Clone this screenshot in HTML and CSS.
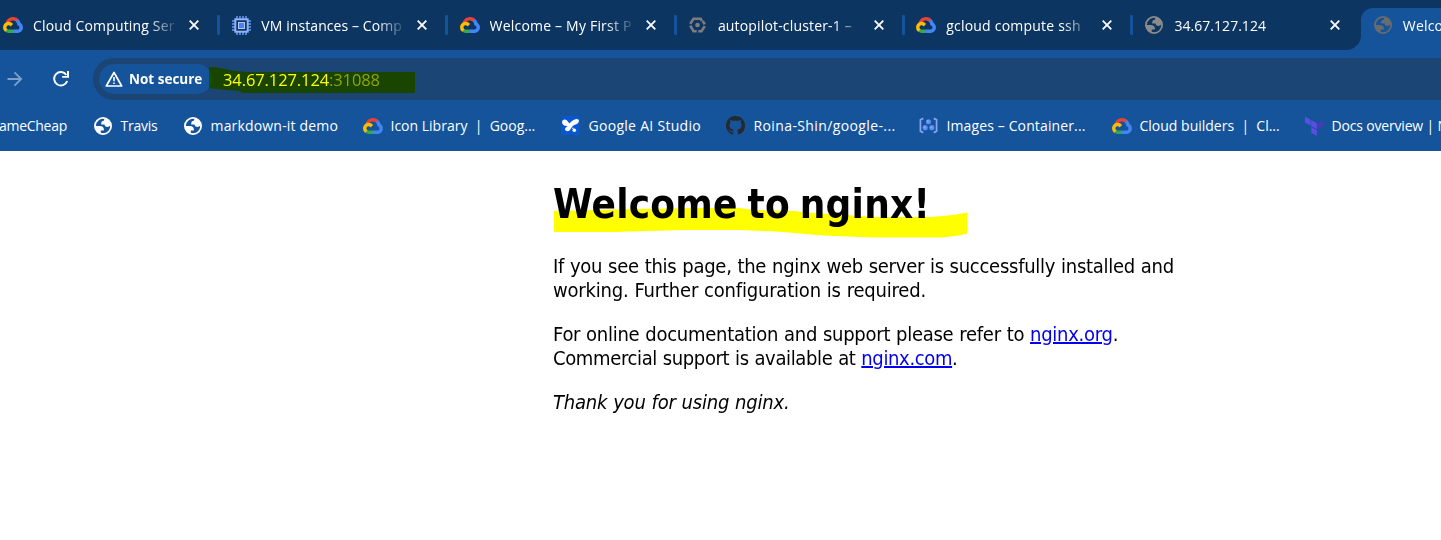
FILE: index.html
```html
<!DOCTYPE html>
<html lang="en">
<head>
<meta charset="utf-8">
<title>Welcome to nginx!</title>
<link rel="stylesheet" href="styles.css">
</head>
<body>
<svg class="sprite" aria-hidden="true">
  <symbol id="gcp" viewBox="0 0 256 206">
    <path fill="#ea4335" d="M170.25 56.82l22.25-22.25 1.49-9.37C153.44-11.68 88.98-7.5 52.42 33.92 42.27 45.42 34.73 59.76 30.72 74.57l7.97-1.12 44.5-7.34 3.44-3.51c19.8-21.74 53.27-24.67 76.13-6.17z"/>
    <path fill="#4285f4" d="M224.2 73.92A100.2 100.2 0 0 0 194 25.2l-31.23 31.23a55.5 55.5 0 0 1 20.37 44.04v5.54c15.35 0 27.8 12.45 27.8 27.8s-12.45 27.48-27.8 27.48h-55.67l-5.47 5.93v33.34l5.47 5.24h55.67c39.93.31 72.55-31.49 72.86-71.42.19-24.2-11.74-46.9-31.8-60.46"/>
    <path fill="#34a853" d="M71.87 205.8h55.6v-44.51h-55.6a27.3 27.3 0 0 1-11.48-2.5l-7.8 2.42-22.41 22.25-1.95 7.58a72.3 72.3 0 0 0 43.64 14.76"/>
    <path fill="#fbbc05" d="M71.87 61.43C31.94 61.66-.24 94.22 0 134.15c.13 22.25 10.6 43.25 28.22 56.89l32.25-32.24a27.8 27.8 0 1 1 36.8-36.75l32.24-32.25a72.5 72.5 0 0 0-57.64-28.37"/>
  </symbol>
  <symbol id="globe" viewBox="2 2 20 20">
    <path fill="currentColor" fill-rule="evenodd" d="M12 2a10 10 0 1 0 0 20 10 10 0 0 0 0-20zM4 12h4.4c3.407.022 4.922 1.73 4.543 5.127H9.488v2.47a8.004 8.004 0 0 0 10.498-8.08C19.327 12.5 18.332 13 17 13c-2.137 0-3.206-.917-3.206-2.75h-3.748c-.274-2.728.683-4.092 2.87-4.092 0-.975.327-1.597.811-1.97A8.004 8.004 0 0 0 4 12z"/>
  </symbol>
  <symbol id="chip" viewBox="0 0 19 19">
    <path stroke="#669df6" stroke-width="1.5" d="M5 0v19M8 0v19M11 0v19M14 0v19M0 5h19M0 8h19M0 11h19M0 14h19"/>
    <rect x="3.3" y="3.3" width="12.4" height="12.4" fill="#0c3561" stroke="#8fb0fa" stroke-width="2"/>
    <rect x="6.5" y="6.5" width="6" height="6" fill="#4a80f0" stroke="#aecbfa" stroke-width="1"/>
  </symbol>
  <symbol id="cluster" viewBox="0 0 18 16">
    <path fill="none" stroke="#7c7c80" stroke-width="2.8" d="M1.300 6.800L4.800 1.400h7.600l1.200 2.200M16.700 9.200l-3.500 5.400H9.800M8.200 14.600H4.800L1.300 8.600M16.700 7.400l-2.200-3.600"/>
    <circle cx="9" cy="8" r="2.500" fill="#7c7c80"/>
  </symbol>
  <symbol id="close" viewBox="0 0 10 10"><path fill="none" stroke="#fff" stroke-width="1.8" d="M.7.7l8.6 8.6M9.3.7L.7 9.3"/></symbol>
</svg>

<header>
  <nav class="tabs">
    <div class="tab"><span class="ico"><svg class="gcp"><use href="#gcp"/></svg></span><span class="label t1">Cloud Computing Ser</span><svg class="close"><use href="#close"/></svg></div>
    <div class="tab"><span class="ico"><svg class="chip"><use href="#chip"/></svg></span><span class="label t2">VM instances – Comp</span><svg class="close"><use href="#close"/></svg></div>
    <div class="tab"><span class="ico"><svg class="gcp"><use href="#gcp"/></svg></span><span class="label t3">Welcome – My First P</span><svg class="close"><use href="#close"/></svg></div>
    <div class="tab"><span class="ico"><svg class="cluster"><use href="#cluster"/></svg></span><span class="label t4">autopilot-cluster-1 –</span><svg class="close"><use href="#close"/></svg></div>
    <div class="tab"><span class="ico"><svg class="gcp"><use href="#gcp"/></svg></span><span class="label t5">gcloud compute ssh</span><svg class="close"><use href="#close"/></svg></div>
    <div class="tab last"><span class="ico"><svg class="globe grey"><use href="#globe"/></svg></span><span class="label t6">34.67.127.124</span><svg class="close"><use href="#close"/></svg></div>
    <div class="tab active"><span class="ico"><svg class="globe dim"><use href="#globe"/></svg></span><span class="label t3">Welcome</span></div>
  </nav>

  <div class="toolbar">
    <svg class="forward" viewBox="0 0 16 16"><path fill="none" stroke="#7e9fc9" stroke-width="1.8" d="M.5 8h13.5M7.5 1.4L14.2 8l-6.7 6.6"/></svg>
    <svg class="reload" viewBox="0 0 16 16"><path fill="none" stroke="#fff" stroke-width="2" d="M14.2 10A6.7 6.7 0 1 1 13.4 4"/><path fill="#fff" d="M16 0v6.8H9.2V5H14V0z"/></svg>
    <div class="omnibox">
      <span class="pill"><svg viewBox="0 0 18 16"><path fill="none" stroke="#fff" stroke-width="1.7" stroke-linejoin="round" d="M9 1.5L16.7 15H1.3z"/><path fill="#fff" d="M8.2 6h1.6v4.3H8.2zM8.2 11.4h1.6V13H8.2z"/></svg>Not secure</span>
      <span class="url">34.67.127.124<span class="port">:31088</span></span>
      <svg class="marker" viewBox="0 0 206 28"><path fill="#ff0" d="M0 1h7l9 2 10 2 12 1h168v21H34l-4-2-13-1-10-1-7-1z"/></svg>
    </div>
  </div>

  <div class="bookmarks">
    <span class="bm b0">NameCheap</span>
    <span class="bm b1"><span class="ico"><svg class="globe"><use href="#globe"/></svg></span>Travis</span>
    <span class="bm b2"><span class="ico"><svg class="globe"><use href="#globe"/></svg></span>markdown-it demo</span>
    <span class="bm b3"><span class="ico"><svg class="gcp"><use href="#gcp"/></svg></span>Icon Library&nbsp; |&nbsp; Goog...</span>
    <span class="bm b4"><span class="ico"><svg class="sq" viewBox="0 0 20 20"><rect width="20" height="20" rx="1.5" fill="#0957d0"/><path fill="#fff" d="M1.200 6C1.500 3.500 4.500 3.200 6 4.500l3 3.500C11 5.500 13.500 3.200 16.500 3.200c3.200 0 3 3.600.3 5.100-2 1-3.800 1.200-5 2.700-1.300 1.700-2.200 5-4.900 5-2.600 0-3.400-2.300-1.800-3.800L7 10.500C3.500 10.400.8 9 1.200 6z"/><circle cx="14" cy="15" r="1.900" fill="#fff"/><circle cx="12.500" cy="12.800" r=".8" fill="#fff"/></svg></span>Google AI Studio</span>
    <span class="bm b5"><span class="ico"><svg class="sq" viewBox="0 0 16 16"><path fill="#24292f" d="M8 0C3.580 0 0 3.580 0 8c0 3.540 2.290 6.530 5.470 7.590.4.070.55-.17.55-.38 0-.19-.01-.82-.01-1.490-2.010.37-2.530-.49-2.690-.94-.09-.23-.48-.94-.82-1.130-.28-.15-.68-.52-.01-.53.63-.01 1.080.58 1.230.82.72 1.210 1.870.87 2.330.66.070-.52.28-.87.51-1.070-1.780-.2-3.640-.89-3.640-3.950 0-.87.31-1.590.82-2.150-.08-.2-.36-1.020.08-2.120 0 0 .67-.21 2.200.82a7.600 7.600 0 0 1 4 0c1.530-1.040 2.200-.82 2.200-.82.44 1.100.16 1.920.08 2.120.51.56.82 1.270.82 2.150 0 3.070-1.870 3.750-3.650 3.950.29.25.54.73.54 1.480 0 1.070-.01 1.930-.01 2.200 0 .21.15.46.55.38A8.010 8.010 0 0 0 16 8c0-4.420-3.580-8-8-8z"/></svg></span>Roina-Shin/google-...</span>
    <span class="bm b6"><span class="ico"><svg class="sq" viewBox="0 0 20 20"><path fill="none" stroke="#8aa4f0" stroke-width="1.800" d="M4.500 2.500L1.500 4v12l3 1.500M15.500 2.500l3 1.500v12l-3 1.500"/><g fill="#5c8ef5"><circle cx="10" cy="6" r="2.700"/><circle cx="6.500" cy="12.300" r="2.700"/><circle cx="13.500" cy="12.300" r="2.700"/></g><g fill="#8aa4f8"><circle cx="9.200" cy="5.500" r="1.100"/><circle cx="5.800" cy="11.800" r="1.100"/><circle cx="12.800" cy="11.800" r="1.100"/></g></svg></span>Images – Container...</span>
    <span class="bm b7"><span class="ico"><svg class="gcp"><use href="#gcp"/></svg></span>Cloud builders&nbsp; |&nbsp; Cl...</span>
    <span class="bm b8"><span class="ico"><svg class="tf" viewBox="0 0 18 20"><path fill="#5c4ee5" d="M0 .5l5.600 3.200v6L0 6.500zM6.200 4l5.600 3.200v6L6.200 10zM6.200 11.100l5.600 3.200V20l-5.600-3.200z"/><path fill="#4040b2" d="M12.400 7.200L18 4v6l-5.600 3.200z"/></svg></span>Docs overview | Nginx</span>
  </div>
</header>

<main>
  <svg class="marker" viewBox="0 0 413 31"><path fill="#ff0" d="M0 4L40 3l40-1 60-1h46l14 2 40 1 20 2 25 1.500 35 2.500h57l22-2 14-2.500V26.500l-8 2-17 2h-69l-50-2-23-2-24-2-36-1.500h-55l-38 1-31 1H0z"/></svg>
  <h1>Welcome to nginx!</h1>
  <p class="l1">If you see this page, the nginx web server is successfully installed and<br><span class="l2">working. Further configuration is required.</span></p>
  <p class="l3">For online documentation and support please refer to <a href="#">nginx.org</a>.<br><span class="l4">Commercial support is available at <a href="#">nginx.com</a>.</span></p>
  <p class="l5"><em>Thank you for using nginx.</em></p>
</main>
</body>
</html>
```
FILE: styles.css
```css
* { box-sizing: border-box; }
body { margin: 0; background: #fff; width: 1441px; height: 540px; overflow: hidden; font-family: "Open Sans", "Noto Sans", sans-serif; }
svg { display: block; flex: none; }
.sprite { position: absolute; width: 0; height: 0; }

header { height: 151px; background: #15539a; color: #fff; overflow: hidden; font-size: 14px; white-space: nowrap; }
.ico { width: 20px; height: 20px; flex: none; display: flex; align-items: center; justify-content: center; }
.gcp { width: 20px; height: 16px; }
.globe { width: 18px; height: 18px; color: #fff; }
.grey { color: #8b8b8b; }
.dim { color: #686b70; }
.chip { width: 19px; height: 19px; }
.cluster { width: 17px; height: 16px; }
.sq { width: 19px; height: 19px; }
.tf { width: 18px; height: 20px; }

.tabs { height: 50px; background: #0c3561; display: flex; margin-left: -8.4px; }
.tab { width: 228.3px; flex: none; display: flex; align-items: center; padding-left: 11.400px; position: relative; }
.tab::after { content: ""; position: absolute; right: 0; top: 15px; width: 3px; height: 20px; border-radius: 1px; background: #15539a; }
.tab.last::after { display: none; }
.label { width: 142px; height: 22px; margin-left: 10px; padding-top: 2px; line-height: 20px; overflow: hidden; white-space: pre; -webkit-mask-image: linear-gradient(to right, #000 116px, transparent 146px); mask-image: linear-gradient(to right, #000 116px, transparent 146px); }
.close { width: 10px; height: 10px; margin-left: 14px; }
.t1 { letter-spacing: .158px; }
.t2 { letter-spacing: .087px; }
.t3 { letter-spacing: .198px; }
.t4 { letter-spacing: .163px; }
.t5 { letter-spacing: .211px; }
.t6 { letter-spacing: .032px; }
.active { z-index: 0; }
.active::before { content: ""; position: absolute; z-index: -1; left: 0; right: 0; top: 8px; bottom: 0; border-radius: 12px 0 0 0; background: #15539a; }
.active::after { left: -15px; right: auto; top: 35px; width: 15px; height: 15px; border-radius: 0; background: radial-gradient(circle at 0 0, transparent 14.5px, #15539a 15.5px); }

.toolbar { height: 50px; padding-top: 8px; display: flex; }
.forward { width: 16px; height: 16px; margin: 13px 0 0 7px; }
.reload { width: 16px; height: 16px; margin: 13px 0 0 30px; }
.omnibox { width: 1372px; height: 42px; flex: none; margin-left: 24px; border-radius: 21px; background: #1a4574; display: flex; align-items: center; padding-left: 6px; position: relative; isolation: isolate; }
.pill { width: 113px; height: 30px; border-radius: 15px; background: #15539a; display: flex; align-items: center; gap: 6px; padding-left: 6px; font-weight: 700; font-size: 13.500px; line-height: 28px; }
.pill svg { width: 18px; height: 16px; }
.url { margin-left: 11px; font-size: 16.500px; letter-spacing: -.1px; line-height: 22px; padding-top: 1px; }
.port { color: #8fa5bf; }
.marker { position: absolute; mix-blend-mode: multiply; }
.omnibox .marker { left: 116px; top: 8px; width: 206px; height: 28px; }

.bookmarks { height: 51px; padding-top: 1px; display: flex; align-items: center; border-bottom: 1px solid #195694; }
.bm { flex: none; display: flex; align-items: center; gap: 8px; line-height: 20px; }
.b0 { width: 67px; margin-right: 25.500px; justify-content: flex-end; letter-spacing: -.276px; }
.b1 { width: 90px; letter-spacing: -.25px; }
.b2 { width: 180px; letter-spacing: .174px; }
.b3 { width: 198px; }
.b4 { width: 165px; letter-spacing: .292px; }
.b5 { width: 193px; letter-spacing: .383px; }
.b6 { width: 193px; letter-spacing: .124px; }
.b7 { width: 192px; }
.b8 { letter-spacing: -.177px; }

main { width: 640px; margin: 29px 0 0 553px; position: relative; isolation: isolate; font: 20px/24px "DejaVu Sans Condensed", "DejaVu Sans", sans-serif; font-stretch: condensed; color: #000; white-space: nowrap; }
main .marker { left: 1px; top: 27px; width: 413px; height: 31px; }
h1 { margin: 0 0 26px; font-size: 40px; line-height: 48px; letter-spacing: .25px; word-spacing: -3px; }
p { margin: 0 0 20px; word-spacing: .4px; }
a { color: #00e; text-decoration: underline; }
.l1 { letter-spacing: -.265px; }
.l2 { letter-spacing: -.192px; }
.l3 { letter-spacing: -.262px; }
.l4 { letter-spacing: -.36px; }
.l5 { letter-spacing: -.2px; }
```
